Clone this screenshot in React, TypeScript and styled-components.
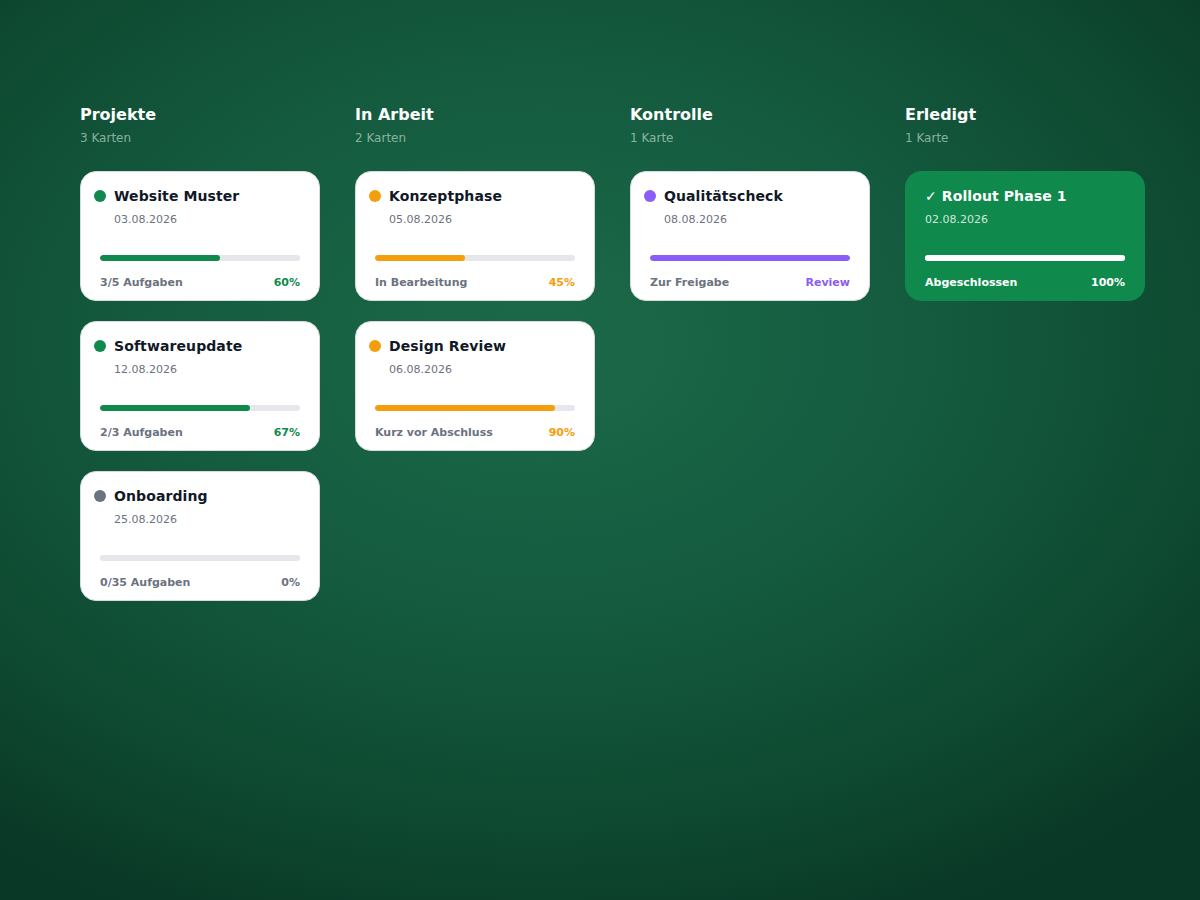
import React from "react";
import styled, { createGlobalStyle } from "styled-components";

const Global = createGlobalStyle`
  html, body { margin: 0; padding: 0; }
  body {
    font-family: "DejaVu Sans", "Liberation Sans", sans-serif;
    min-height: 900px;
    background: radial-gradient(ellipse 75% 70% at 45% 38%, #1c6a4a 0%, #145a3e 45%, #0e4a31 75%, #0a3826 100%);
  }
`;

const Board = styled.main`
  display: grid;
  grid-template-columns: repeat(4, 240px);
  column-gap: 35px;
  padding: 105px 80px 0;
  align-items: start;
`;

const Column = styled.section`
  display: flex;
  flex-direction: column;
`;

const ColTitle = styled.h2`
  margin: 0;
  font-size: 16px;
  line-height: 20px;
  font-weight: 700;
  color: #ffffff;
`;

const ColCount = styled.div`
  margin-top: 5px;
  font-size: 12px;
  line-height: 16px;
  color: rgba(205, 228, 216, 0.65);
`;

const CardList = styled.div`
  margin-top: 25px;
  display: flex;
  flex-direction: column;
  gap: 20px;
`;

const Card = styled.article<{ $done?: boolean }>`
  box-sizing: border-box;
  height: 130px;
  border-radius: 16px;
  padding: 15px 19px 9px;
  background: ${(p) => (p.$done ? "#0f8a4c" : "#ffffff")};
  border: 1px solid ${(p) => (p.$done ? "#0f8a4c" : "#d6dcd9")};
  display: flex;
  flex-direction: column;
`;

const TitleRow = styled.div<{ $dot: boolean }>`
  display: flex;
  align-items: center;
  gap: 8px;
  margin-left: ${(p) => (p.$dot ? "-6px" : "0")};
`;

const Dot = styled.span<{ $color: string }>`
  width: 12px;
  height: 12px;
  border-radius: 50%;
  background: ${(p) => p.$color};
  flex: none;
`;

const CardTitle = styled.h3<{ $done?: boolean }>`
  margin: 0;
  font-size: 14px;
  line-height: 18px;
  font-weight: 700;
  letter-spacing: 0.1px;
  color: ${(p) => (p.$done ? "#ffffff" : "#111827")};
`;

const DateText = styled.div<{ $done?: boolean }>`
  margin-top: 8px;
  margin-left: ${(p) => (p.$done ? "0" : "14px")};
  font-size: 11px;
  line-height: 14px;
  color: ${(p) => (p.$done ? "rgba(255,255,255,0.82)" : "#6b7280")};
`;

const Track = styled.div<{ $done?: boolean }>`
  margin-top: 28px;
  height: 6px;
  border-radius: 3px;
  background: ${(p) => (p.$done ? "#ffffff" : "#e5e7eb")};
  overflow: hidden;
`;

const Fill = styled.div<{ $color: string }>`
  height: 100%;
  border-radius: 3px;
  background: ${(p) => p.$color};
`;

const Footer = styled.div`
  margin-top: 15px;
  display: flex;
  justify-content: space-between;
  font-size: 11px;
  line-height: 14px;
  font-weight: 700;
`;

const FootLabel = styled.span<{ $done?: boolean }>`
  color: ${(p) => (p.$done ? "#ffffff" : "#6b7280")};
`;

const FootValue = styled.span<{ $color: string }>`
  color: ${(p) => p.$color};
`;

type CardData = {
  title: string;
  date: string;
  dot?: string;
  color: string;
  pct: number;
  label: string;
  value: string;
  valueColor: string;
  done?: boolean;
};

const GREEN = "#0f8a4c";
const ORANGE = "#f59e0b";
const PURPLE = "#8b5cf6";
const GREY = "#6b7280";

const columns: { title: string; count: string; cards: CardData[] }[] = [
  {
    title: "Projekte",
    count: "3 Karten",
    cards: [
      { title: "Website Muster", date: "03.08.2026", dot: GREEN, color: GREEN, pct: 60, label: "3/5 Aufgaben", value: "60%", valueColor: GREEN },
      { title: "Softwareupdate", date: "12.08.2026", dot: GREEN, color: GREEN, pct: 75, label: "2/3 Aufgaben", value: "67%", valueColor: GREEN },
      { title: "Onboarding", date: "25.08.2026", dot: GREY, color: GREY, pct: 0, label: "0/35 Aufgaben", value: "0%", valueColor: GREY },
    ],
  },
  {
    title: "In Arbeit",
    count: "2 Karten",
    cards: [
      { title: "Konzeptphase", date: "05.08.2026", dot: ORANGE, color: ORANGE, pct: 45, label: "In Bearbeitung", value: "45%", valueColor: ORANGE },
      { title: "Design Review", date: "06.08.2026", dot: ORANGE, color: ORANGE, pct: 90, label: "Kurz vor Abschluss", value: "90%", valueColor: ORANGE },
    ],
  },
  {
    title: "Kontrolle",
    count: "1 Karte",
    cards: [
      { title: "Qualitätscheck", date: "08.08.2026", dot: PURPLE, color: PURPLE, pct: 100, label: "Zur Freigabe", value: "Review", valueColor: PURPLE },
    ],
  },
  {
    title: "Erledigt",
    count: "1 Karte",
    cards: [
      { title: "✓ Rollout Phase 1", date: "02.08.2026", color: "#ffffff", pct: 100, label: "Abgeschlossen", value: "100%", valueColor: "#ffffff", done: true },
    ],
  },
];

export default function App() {
  return (
    <>
      <Global />
      <Board>
        {columns.map((col) => (
          <Column key={col.title}>
            <ColTitle>{col.title}</ColTitle>
            <ColCount>{col.count}</ColCount>
            <CardList>
              {col.cards.map((c) => (
                <Card key={c.title} $done={c.done}>
                  <TitleRow $dot={!!c.dot}>
                    {c.dot && <Dot $color={c.dot} />}
                    <CardTitle $done={c.done}>{c.title}</CardTitle>
                  </TitleRow>
                  <DateText $done={c.done}>{c.date}</DateText>
                  <Track $done={c.done}>
                    <Fill $color={c.color} style={{ width: `${c.pct}%` }} />
                  </Track>
                  <Footer>
                    <FootLabel $done={c.done}>{c.label}</FootLabel>
                    <FootValue $color={c.valueColor}>{c.value}</FootValue>
                  </Footer>
                </Card>
              ))}
            </CardList>
          </Column>
        ))}
      </Board>
    </>
  );
}
